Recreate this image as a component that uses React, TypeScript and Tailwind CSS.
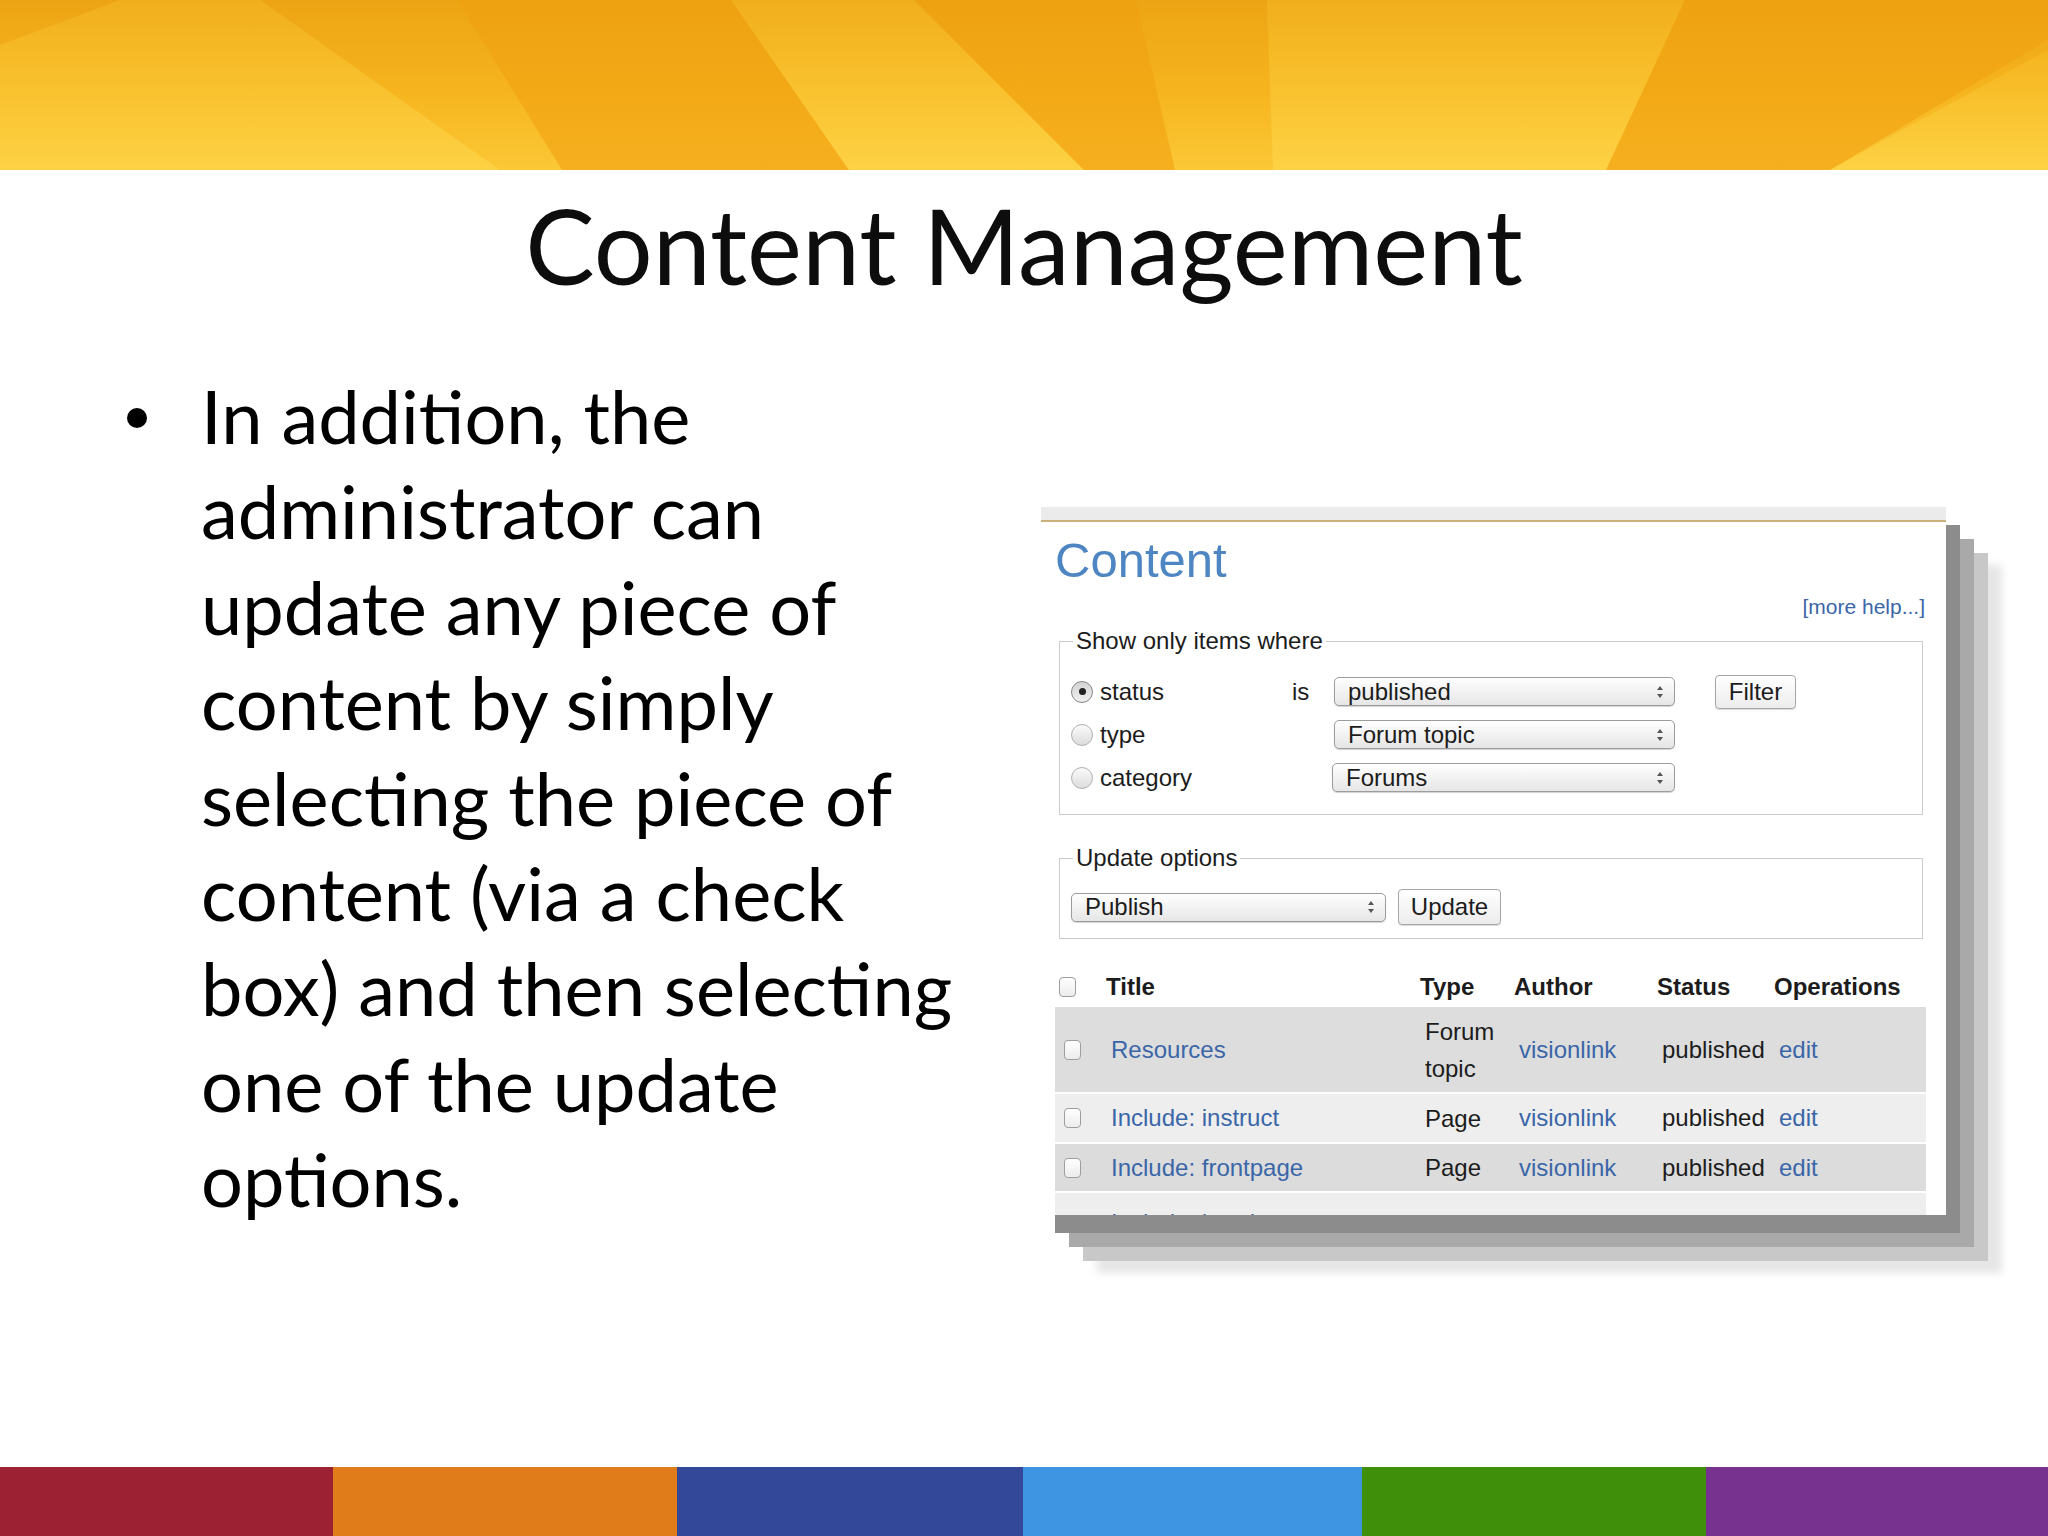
import React from "react";

const lines = [
  "In addition, the",
  "administrator can",
  "update any piece of",
  "content by simply",
  "selecting the piece of",
  "content (via a check",
  "box) and then selecting",
  "one of the update",
  "options.",
];

function Arrows() {
  return (
    <svg width="8" height="14" viewBox="0 0 8 14" className="shrink-0">
      <polygon points="4,1 7,5 1,5" fill="#555" />
      <polygon points="1,9 7,9 4,13" fill="#555" />
    </svg>
  );
}

function Select({ label, w }: { label: string; w: string }) {
  return (
    <div
      className={`flex h-[29px] items-center justify-between rounded-[5px] border border-[#9c9c9c] bg-gradient-to-b from-white to-[#e6e6e6] pl-[13px] pr-[10px] shadow-[0_1px_1px_rgba(0,0,0,0.18)] ${w}`}
    >
      <span className="leading-[26px]">{label}</span>
      <Arrows />
    </div>
  );
}

function Button({ label, w }: { label: string; w: string }) {
  return (
    <div
      className={`flex items-center justify-center rounded-[4px] border border-[#a6a6a6] bg-gradient-to-b from-white to-[#ececec] shadow-[0_1px_1px_rgba(0,0,0,0.15)] ${w}`}
    >
      {label}
    </div>
  );
}

function Radio({ on }: { on?: boolean }) {
  return (
    <span
      className={`flex h-[22px] w-[22px] shrink-0 items-center justify-center rounded-full border ${
        on
          ? "border-[#858585] bg-gradient-to-b from-[#d4d4d4] to-[#f0f0f0]"
          : "border-[#b0b0b0] bg-gradient-to-b from-[#fbfbfb] to-[#dcdcdc]"
      }`}
    >
      {on && <span className="h-[7px] w-[7px] rounded-full bg-[#222]" />}
    </span>
  );
}

function Check() {
  return (
    <span className="block h-[20px] w-[17px] rounded-[4px] border border-[#9e9e9e] bg-gradient-to-b from-white to-[#ececec]" />
  );
}

const rows = [
  { title: "Resources", type: ["Forum", "topic"], h: "h-[85px]", bg: "bg-[#dddddd]" },
  { title: "Include: instruct", type: ["Page"], h: "h-[48px]", bg: "bg-[#eeeeee]" },
  { title: "Include: frontpage", type: ["Page"], h: "h-[47px]", bg: "bg-[#dcdcdc]" },
];

function Banner() {
  return (
    <svg
      width="2048"
      height="170"
      viewBox="0 0 2048 170"
      preserveAspectRatio="none"
      className="block"
    >
      <defs>
        <linearGradient id="bg" x1="0" y1="0" x2="0" y2="1">
          <stop offset="0" stopColor="#eda414" />
          <stop offset="0.55" stopColor="#f6b51f" />
          <stop offset="1" stopColor="#fbc836" />
        </linearGradient>
        <linearGradient id="dk" x1="0" y1="0" x2="0" y2="1">
          <stop offset="0" stopColor="#ee9e0e" stopOpacity="0.45" />
          <stop offset="1" stopColor="#f29f0f" stopOpacity="0.6" />
        </linearGradient>
        <linearGradient id="lt" x1="0" y1="0" x2="0" y2="1">
          <stop offset="0" stopColor="#f9c22c" stopOpacity="0.35" />
          <stop offset="1" stopColor="#fed64a" stopOpacity="0.7" />
        </linearGradient>
      </defs>
      <rect x="0" y="0" width="2048" height="170" fill="url(#bg)" />
      <polygon points="0,45 0,170 500,170 260,0 120,0" fill="url(#lt)" />
      <polygon points="457,0 731,0 849,170 562,170" fill="url(#dk)" />
      <polygon points="731,0 914,0 1084,170 849,170" fill="url(#lt)" />
      <polygon points="914,0 1136,0 1175,170 1084,170" fill="url(#dk)" />
      <polygon points="1267,0 1685,0 1606,170 1273,170" fill="url(#lt)" />
      <polygon points="1685,0 2048,0 2048,40 1830,170 1606,170" fill="url(#dk)" />
      <polygon points="2048,50 2048,170 1830,170" fill="url(#lt)" />
    </svg>
  );
}

const cols = "grid-cols-[47px_314px_94px_143px_117px_1fr]";

export default function App() {
  return (
    <div className="flex h-[1536px] w-[2048px] flex-col overflow-hidden bg-white">
      <header className="h-[170px] shrink-0">
        <Banner />
      </header>

      <h1 className="mt-[12px] text-center font-['Lato',sans-serif] text-[104px] font-normal leading-[125px] text-[#0d0d0d]">
        Content Management
      </h1>

      <main className="mt-[61px] flex flex-1 items-start">
        <div className="flex w-[1041px] shrink-0 pl-[127px]">
          <div className="w-[74px] shrink-0">
            <div className="mt-[40px] h-[20px] w-[20px] rounded-full bg-black" />
          </div>
          <div className="font-['Lato',sans-serif] text-[74px] leading-[95.4px] text-black">
            {lines.map((l) => (
              <span key={l} className="block whitespace-nowrap">
                {l}
              </span>
            ))}
          </div>
        </div>

        <div className="mt-[139px] w-[905px] shrink-0 shadow-[14px_18px_0_#8c8c8c,28px_32px_0_#a9a9a9,42px_46px_0_#c8c8c8,56px_58px_8px_#e6e6e6] font-['Liberation_Sans',Arial,sans-serif] text-[24px] leading-[28px] text-[#1c1c1c]">
          <div className="h-[13px] bg-[#ebebeb]" />
          <div className="h-[2px] bg-[#c9b27a]" />
          <div className="h-[693px] overflow-hidden bg-white pl-[14px] pr-[20px]">
            <div className="pt-[10px] text-[49px] leading-[56px] text-[#4e85c3]">
              Content
            </div>
            <div className="mt-[7px] pr-[1px] text-right text-[21px] leading-[24px] text-[#3a66a8]">
              [more help...]
            </div>

            <fieldset className="mt-[8px] ml-[4px] mr-[3px] border border-[#cccccc]">
              <legend className="ml-[13px] px-[3px] text-[24px] leading-[28px]">
                Show only items where
              </legend>
              <div className="px-[11px] pt-[15px] pb-[15px]">
                <div className="flex h-[43px] items-center">
                  <div className="flex w-[221px] items-center gap-[7px]">
                    <Radio on />
                    <span>status</span>
                  </div>
                  <span className="w-[42px]">is</span>
                  <Select label="published" w="w-[341px]" />
                  <Button label="Filter" w="ml-[40px] h-[34px] w-[81px]" />
                </div>
                <div className="flex h-[43px] items-center">
                  <div className="flex w-[221px] items-center gap-[7px]">
                    <Radio />
                    <span>type</span>
                  </div>
                  <span className="w-[42px]" />
                  <Select label="Forum topic" w="w-[341px]" />
                </div>
                <div className="flex h-[43px] items-center">
                  <div className="flex w-[219px] items-center gap-[7px]">
                    <Radio />
                    <span>category</span>
                  </div>
                  <span className="w-[42px]" />
                  <Select label="Forums" w="w-[343px]" />
                </div>
              </div>
            </fieldset>

            <fieldset className="mt-[29px] ml-[4px] mr-[3px] border border-[#cccccc]">
              <legend className="ml-[13px] px-[3px] text-[24px] leading-[28px]">
                Update options
              </legend>
              <div className="flex items-center gap-[12px] px-[11px] pt-[17px] pb-[13px]">
                <Select label="Publish" w="w-[315px]" />
                <Button label="Update" w="h-[36px] w-[103px]" />
              </div>
            </fieldset>

            <div className="mt-[29px]">
              <div className={`grid h-[37px] items-center pl-[4px] font-bold ${cols}`}>
                <Check />
                <span>Title</span>
                <span>Type</span>
                <span>Author</span>
                <span>Status</span>
                <span>Operations</span>
              </div>
              {rows.map((r) => (
                <div
                  key={r.title}
                  className={`mt-[2px] grid items-center pl-[9px] ${cols} ${r.h} ${r.bg}`}
                >
                  <Check />
                  <span className="text-[#3a66a8]">{r.title}</span>
                  <span className="leading-[37px]">
                    {r.type.map((t) => (
                      <span key={t} className="block">
                        {t}
                      </span>
                    ))}
                  </span>
                  <span className="text-[#3a66a8]">visionlink</span>
                  <span>published</span>
                  <span className="text-[#3a66a8]">edit</span>
                </div>
              ))}
              <div className={`mt-[2px] grid h-[48px] items-start pl-[9px] pt-[16px] bg-[#eeeeee] ${cols}`}>
                <span />
                <span className="text-[#3a66a8]">Include: header</span>
              </div>
            </div>
          </div>
        </div>
      </main>

      <footer className="flex h-[69px] shrink-0">
        <div className="w-[333px] bg-[#9b2133]" />
        <div className="w-[344px] bg-[#e07c19]" />
        <div className="w-[346px] bg-[#34489a]" />
        <div className="w-[339px] bg-[#3e95e2]" />
        <div className="w-[344px] bg-[#3f8f0a]" />
        <div className="flex-1 bg-[#77318f]" />
      </footer>
    </div>
  );
}
